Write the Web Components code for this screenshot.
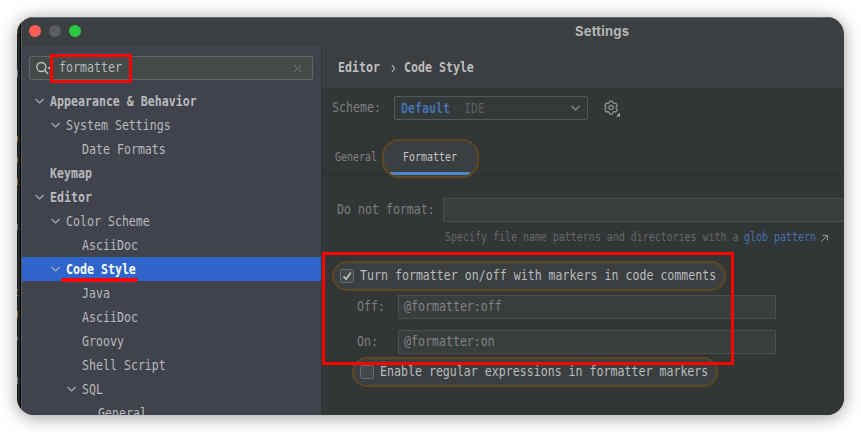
<!DOCTYPE html>
<html lang="en">
<head>
<meta charset="utf-8">
<title>Settings</title>
<style>
html, body { margin: 0; height: 100%; background: #fff; overflow: hidden; }
</style>
</head>
<body>
<settings-window></settings-window>
<script>
const define = (name, html, setup) => {
  const tpl = document.createElement('template');
  tpl.innerHTML = html;
  customElements.define(name, class extends HTMLElement {
    connectedCallback() {
      if (this.shadowRoot) return;
      this.attachShadow({ mode: 'open' }).appendChild(tpl.content.cloneNode(true));
      if (setup) setup(this, this.shadowRoot);
    }
  });
};

/* Condensed monospace label: each character takes a fixed advance. */
define('mono-text', `<style>
:host { display: block; flex: none; height: 18px; line-height: 18px; white-space: pre; font-family: "DejaVu Sans Mono", monospace; font-size: 13.5px; }
:host([small]) { font-size: 12px; }
:host([bold]) { font-weight: bold; }
span { display: inline-block; transform-origin: 0 50%; transform: translateY(-1px) scaleX(var(--k)); }
</style><span></span>`, (el, root) => {
  const small = el.hasAttribute('small');
  const adv = small ? 5.99 : 6.985;
  const text = el.getAttribute('text') || '';
  root.querySelector('span').textContent = text;
  el.style.width = (text.length * adv) + 'px';
  el.style.setProperty('--k', adv / ((small ? 12 : 13.5) * 0.602));
});

define('chevron-icon', `<style>:host { display: block; flex: none; width: 10px; height: 8px; } svg { display: block; }</style>
<svg width="10" height="8" viewBox="0 0 10 8" fill="none" stroke="currentColor" stroke-width="1.2"><path d="M.6 2l4 4 4-4"/></svg>`);

define('traffic-lights', `<style>
:host { display: flex; gap: 8px; }
i { width: 12px; height: 12px; border-radius: 50%; background: #ff5f57; }
i:nth-of-type(2) { background: #5c5d60; } i:nth-of-type(3) { background: #28c840; }
</style><i></i><i></i><i></i>`);

define('search-field', `<style>
:host { display: flex; box-sizing: border-box; align-items: center; width: 284px; height: 24px; border: 1px solid #62666a; border-radius: 2px; background: #45494a; color: #b8babb; padding: 0 10px 0 5px; position: relative; }
svg { display: block; flex: none; } mono-text { margin-left: 5px; } .x { margin-left: auto; }
.mark { position: absolute; left: 20px; top: -3px; width: 76px; height: 23px; border: 3px solid #f00; }
</style>
<svg width="19" height="16" viewBox="0 0 19 16" fill="none" stroke="#bfc2c4" stroke-width="1.3"><circle cx="6.3" cy="7" r="4.5"/><path d="M9.6 10.3l3.5 3.7"/><path d="M12.5 7h5l-2.5 3z" fill="#bfc2c4" stroke="none"/></svg>
<mono-text text="formatter"></mono-text>
<svg class="x" width="9" height="9" viewBox="0 0 9 9" stroke="#73787b" stroke-width="1"><path d="M1 1l7 7M8 1l-7 7"/></svg>
<div class="mark"></div>`);

define('tree-row', `<style>
:host { display: flex; box-sizing: border-box; align-items: center; height: 24px; color: #b8babb; position: relative; }
:host([selected]) { background: #2f65ca; color: #fff; }
chevron-icon { margin-right: 4.6px; color: #a9acae; }
.gap { width: 14.6px; }
mono-text { margin-top: 1px; }
u { position: absolute; left: 39px; bottom: -1px; width: 77px; height: 4px; border-radius: 2px; background: #f00; z-index: 1; }
</style>`, (el, root) => {
  el.style.paddingLeft = (13 + 16 * Number(el.getAttribute('level') || 0)) + 'px';
  const lead = document.createElement(el.hasAttribute('open') ? 'chevron-icon' : 'div');
  if (!el.hasAttribute('open')) lead.className = 'gap';
  const t = document.createElement('mono-text');
  t.setAttribute('text', el.getAttribute('text'));
  if (el.hasAttribute('bold')) t.setAttribute('bold', '');
  root.append(lead, t);
  if (el.hasAttribute('selected')) root.append(document.createElement('u'));
});

define('settings-sidebar', `<style>
:host { display: block; box-sizing: border-box; width: 299px; background: #40434c; padding-top: 10px; }
search-field { margin: 0 0 9px 7px; }
</style>
<search-field></search-field>
<tree-row text="Appearance &amp; Behavior" open bold></tree-row>
<tree-row text="System Settings" level="1" open></tree-row>
<tree-row text="Date Formats" level="2"></tree-row>
<tree-row text="Keymap" bold></tree-row>
<tree-row text="Editor" open bold></tree-row>
<tree-row text="Color Scheme" level="1" open></tree-row>
<tree-row text="AsciiDoc" level="2"></tree-row>
<tree-row text="Code Style" level="1" open bold selected></tree-row>
<tree-row text="Java" level="2"></tree-row>
<tree-row text="AsciiDoc" level="2"></tree-row>
<tree-row text="Groovy" level="2"></tree-row>
<tree-row text="Shell Script" level="2"></tree-row>
<tree-row text="SQL" level="2" open></tree-row>
<tree-row text="General" level="3"></tree-row>`);

define('check-pill', `<style>
:host { display: flex; box-sizing: border-box; align-items: center; height: 30px; border: 2px solid #5e4820; border-radius: 15px; background: #3c3f41; color: #b9bbbc; padding-left: 6px; }
i { box-sizing: border-box; flex: none; width: 14px; height: 14px; border: 1px solid #666b6e; border-radius: 1.5px; background: #43484a; margin-right: 6px; }
svg { display: none; } :host([checked]) svg { display: block; }
</style><i><svg width="12" height="12" viewBox="0 0 12 12" fill="none" stroke="#bbb" stroke-width="1.8"><path d="M2.5 6.3l2.7 2.8L9.8 2.5"/></svg></i>`,
(el, root) => {
  const t = document.createElement('mono-text');
  t.setAttribute('text', el.getAttribute('text'));
  root.append(t);
});

define('text-field', `<style>
:host { display: flex; box-sizing: border-box; align-items: center; height: 24px; border: 1px solid #4b4e50; background: #3a3d3e; color: #808384; padding-left: 5px; }
</style><slot></slot>`);

define('form-row', `<style>:host { display: flex; align-items: center; color: #7c7f80; }</style><slot></slot>`);

define('tab-strip', `<style>
:host { display: flex; box-sizing: border-box; align-items: center; height: 38px; padding-left: 12.5px; color: #808384; background: linear-gradient(#2a2d2e,#2a2d2e) 0 35px / 100% 1px no-repeat; }
.active { display: flex; align-items: center; box-sizing: border-box; width: 97px; height: 39px; margin-left: 5.5px; padding-left: 19.5px; border: 2px solid #5e4820; border-radius: 17px; background: #3c3f41 linear-gradient(#4a88c7,#4a88c7) 6px 31px / 80px 3px no-repeat; color: #c1c3c4; }
mono-text { margin-top: -1px; }
</style><mono-text small text="General"></mono-text><div class="active"><mono-text small text="Formatter"></mono-text></div>`);

define('scheme-row', `<style>
:host { display: flex; align-items: center; height: 24px; padding-left: 9.5px; color: #7c7f80; }
.box { display: flex; align-items: center; box-sizing: border-box; width: 194px; height: 24px; border: 1px solid #55585a; border-radius: 2px; margin-left: 13.5px; padding: 0 6px; background: #343839; }
.box mono-text { margin-top: 1px; }
.box mono-text:nth-child(2) { color: #5b5e60; margin-left: 14px; }
chevron-icon { margin-left: auto; color: #8b8e90; } .gear { margin-left: 15px; display: block; }
</style><mono-text text="Scheme:"></mono-text>
<div class="box"><mono-text text="Default" bold style="color:#4473b1"></mono-text><mono-text text="IDE"></mono-text><chevron-icon></chevron-icon></div>
<svg class="gear" width="18" height="18" viewBox="0 0 18 18" fill="none" stroke="#929596" stroke-width="1.2"><path stroke-linejoin="round" d="M6.7 2.1h2.6l.6 1.7 1.3.8 1.8-.4 1.3 2.3-1.2 1.3v1.5l1.2 1.4-1.3 2.2-1.8-.3-1.3.7-.6 1.8H6.7l-.6-1.8-1.3-.7-1.8.3-1.3-2.2 1.2-1.4V7.8L1.7 6.5 3 4.2l1.8.4 1.3-.8z"/><circle cx="8" cy="8.5" r="2.2"/><path d="M17 13.5V17.5h-4z" fill="#aaa" stroke="none"/></svg>`);

define('settings-page', `<style>
:host { display: flex; flex-direction: column; flex: 1; min-width: 0; background: #333637; border-left: 1px solid #303335; box-sizing: border-box; }
header { display: flex; align-items: center; height: 42px; padding-left: 15.6px; background: #3c3f41; color: #bcbebf; }
header mono-text { margin-top: 1px; }
header svg { margin: 2px 8px 0 11px; display: block; }
scheme-row { margin-top: 8px; } tab-strip { margin-top: 19px; }
.skip { margin-top: 21px; padding-left: 14.5px; } .skip text-field { flex: 1; margin-left: 8.5px; border-right: 0; }
.hint { display: flex; align-items: center; padding-left: 122.5px; margin-top: 7px; height: 18px; color: #646768; }
.hint svg { margin: 1px 0 0 4px; }
.p1 { width: 394px; margin: 14px 0 0 10px; }
.p2 { width: 366px; margin: 3px 0 0 30px; }
.off { margin-top: 4px; padding-left: 34.5px; } .on { margin-top: 11px; padding-left: 34.5px; }
.off text-field, .on text-field { width: 378px; margin-left: 13.5px; } .on text-field { margin-left: 20.5px; }
</style>
<header><mono-text text="Editor" bold></mono-text><svg width="5" height="9" viewBox="0 0 5 9" fill="none" stroke="#b0b2b3" stroke-width="1.2"><path d="M1 1l2.5 3.5L1 8"/></svg><mono-text text="Code Style" bold></mono-text></header>
<scheme-row></scheme-row>
<tab-strip></tab-strip>
<form-row class="skip"><mono-text text="Do not format:"></mono-text><text-field></text-field></form-row>
<div class="hint"><mono-text small text="Specify file name patterns and directories with a "></mono-text><mono-text small text="glob pattern" style="color:#4473b1"></mono-text><svg width="9" height="9" viewBox="0 0 9 9" fill="none" stroke="#929596" stroke-width="1"><path d="M1 8L7.5 1.5M2.5 1.5h5v5"/></svg></div>
<check-pill class="p1" checked text="Turn formatter on/off with markers in code comments"></check-pill>
<form-row class="off"><mono-text text="Off:"></mono-text><text-field><mono-text text="@formatter:off"></mono-text></text-field></form-row>
<form-row class="on"><mono-text text="On:"></mono-text><text-field><mono-text text="@formatter:on"></mono-text></text-field></form-row>
<check-pill class="p2" text="Enable regular expressions in formatter markers"></check-pill>`);

/* Slice of the editor that shows behind the dialog's left edge. */
define('editor-edge', `<style>
:host { display: block; width: 5px; box-sizing: border-box; background: #222526; border-right: 1px solid #565a5d; }
svg { display: block; }
</style><svg width="4" height="398" viewBox="0 0 4 398"><path d="M3 0h1v398H3z" fill="#050606"/><g fill="#70767b"><path d="M0 53h1v7H0zM0 207h1v6H0zM0 320h1v3H0zM0 360h1v7H0z"/></g><g fill="#7d732a"><path d="M0 11h1v5H0zM0 119h1v6H0zM0 140h1v6H0zM0 162h1v6H0zM0 272h1v2H0zM0 278h1v1H0zM0 294h1v7H0z"/></g></svg>`);

define('settings-window', `<style>
:host { display: block; position: relative; box-sizing: border-box; padding: 17px; height: 432px; }
.win { display: flex; width: 827px; height: 398px; border-radius: 17px; overflow: hidden; background: #3c3f41; }
.shade { width: 827px; height: 398px; border-radius: 17px; box-shadow: 0 2px 17px rgba(0,0,0,.39); }
.dialog { flex: 1; min-width: 0; display: flex; flex-direction: column; box-sizing: border-box; border-top: 1px solid #656869; }
.bar { display: flex; align-items: center; height: 28px; flex: none; padding: 0 0 2px 7px; box-sizing: border-box; }
.title { margin-left: 494px; font: bold 13px/18px Inter, sans-serif; letter-spacing: .22px; color: #b2b4b5; position: relative; top: -.5px; }
.body { display: flex; flex: 1; min-height: 0; }
.mark { position: absolute; left: 322px; top: 252px; width: 412px; height: 113px; box-sizing: border-box; border: 3px solid #f00; }
</style>
<div class="shade"><div class="win"><editor-edge></editor-edge>
<div class="dialog"><div class="bar"><traffic-lights></traffic-lights><div class="title">Settings</div></div>
<div class="body"><settings-sidebar></settings-sidebar><settings-page></settings-page></div></div></div></div>
<div class="mark"></div>`);
</script>
</body>
</html>
